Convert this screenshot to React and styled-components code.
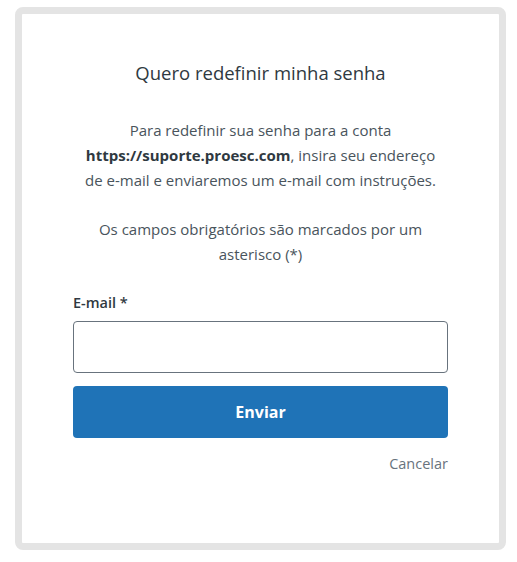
import React, { useState } from 'react';
import styled, { createGlobalStyle } from 'styled-components';

const GlobalStyle = createGlobalStyle`
  body {
    margin: 0;
    background: #ffffff;
    font-family: 'Open Sans', 'Noto Sans', sans-serif;
    color: #2f3941;
  }
`;

const Page = styled.div`
  padding: 7px 11px 12px 15px;
`;

const Card = styled.div`
  box-sizing: border-box;
  width: 491px;
  height: 543px;
  border: 7px solid #e4e4e4;
  border-radius: 8px;
  background: #fff;
  padding: 47px 51px 0 51px;
  display: flex;
  flex-direction: column;
`;

const Title = styled.h2`
  margin: 0;
  font-size: 18.5px;
  font-weight: 400;
  text-align: center;
  line-height: 24px;
  color: #2f3941;
`;

const Info = styled.p`
  margin: ${({ top }) => top}px 0 0;
  padding: 0 4px;
  font-size: 15px;
  line-height: 25px;
  text-align: center;
  color: #49545c;

  strong {
    font-weight: 700;
    color: #2f3941;
  }
`;

const Label = styled.label`
  margin-top: 26px;
  font-size: 14.5px;
  font-weight: 600;
  line-height: 20px;
  color: #2f3941;
`;

const Input = styled.input`
  margin-top: 8px;
  height: 52px;
  box-sizing: border-box;
  border: 1px solid #68737d;
  border-radius: 4px;
  padding: 0 12px;
  font: inherit;
  font-size: 15px;
  outline: none;
`;

const Submit = styled.button`
  margin-top: 13px;
  height: 52px;
  border: none;
  border-radius: 4px;
  background: #1f73b7;
  color: #fff;
  font-family: inherit;
  font-size: 16px;
  font-weight: 700;
  cursor: pointer;
`;

const Cancel = styled.a`
  align-self: flex-end;
  margin-top: 15px;
  font-size: 14.5px;
  line-height: 22px;
  color: #68737d;
  text-decoration: none;
`;

const App = () => {
  const [email, setEmail] = useState('');

  return (
    <Page>
      <GlobalStyle />
      <Card>
        <Title>Quero redefinir minha senha</Title>
        <Info top={33}>
          Para redefinir sua senha para a conta{' '}
          <strong>https://suporte.proesc.com</strong>, insira seu endereço de
          e-mail e enviaremos um e-mail com instruções.
        </Info>
        <Info top={24}>
          Os campos obrigatórios são marcados por um asterisco (*)
        </Info>
        <Label htmlFor="email">E-mail *</Label>
        <Input id="email" type="email" value={email} onChange={e => setEmail(e.target.value)} />
        <Submit type="button">Enviar</Submit>
        <Cancel href="#">Cancelar</Cancel>
      </Card>
    </Page>
  );
};

export default App;
